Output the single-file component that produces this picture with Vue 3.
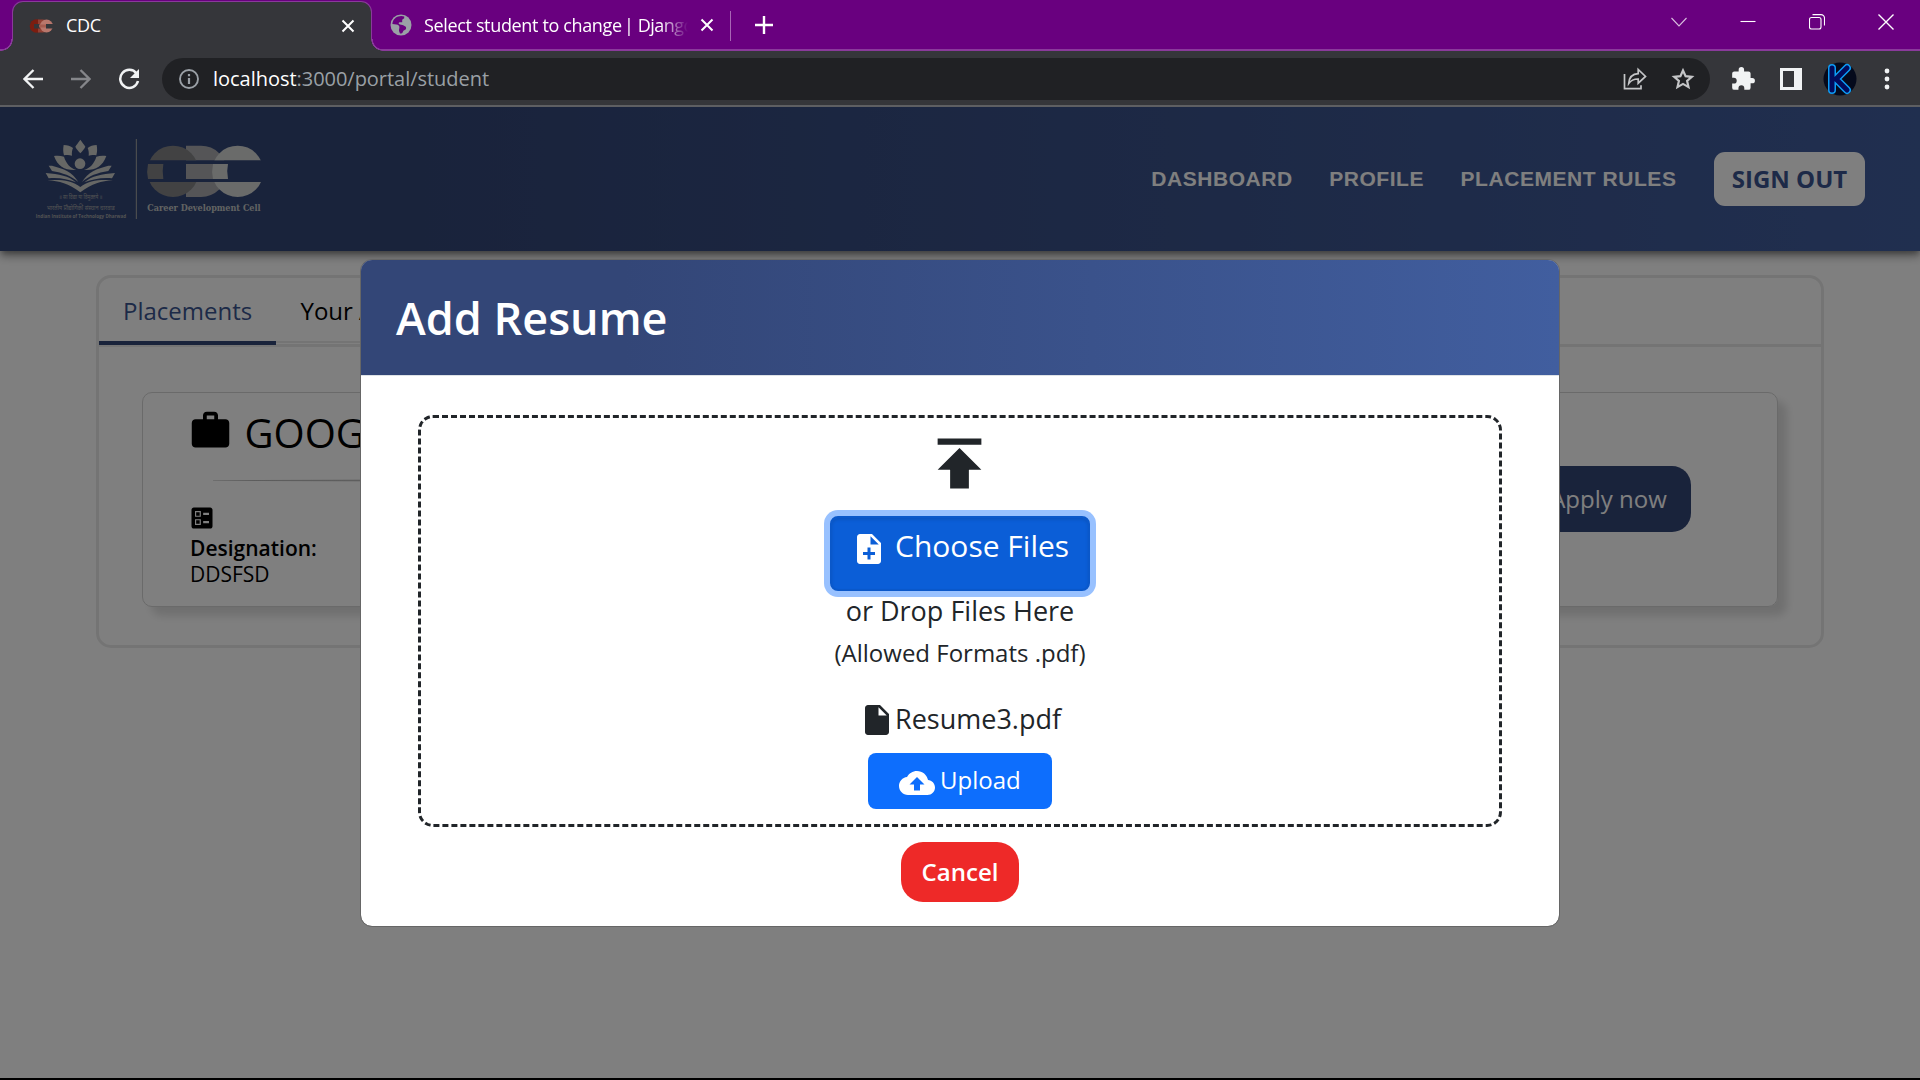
<script setup>
const navLinks = ['DASHBOARD', 'PROFILE', 'PLACEMENT RULES']
</script>

<template>
  <div class="window">
    <div class="tabstrip">
      <div class="tab active">
        <svg class="favicon" width="24" height="16" viewBox="0 0 24 16">
          <circle cx="7.5" cy="8" r="6.8" fill="#7c1d10" />
          <path d="M9 1.5h5a6.5 6.5 0 0 1 0 13H9z" fill="#913f33" />
          <circle cx="17.5" cy="8" r="6.5" fill="#b9776c" />
          <path d="M5 6h6v4.500H5zM17 6h7v4.500h-7z" fill="#35363a" />
          <path d="M10 6.500h7v3h-7z" fill="#a65c50" />
        </svg>
        <span class="tab-title">CDC</span>
        <svg class="tab-close" width="14" height="14" viewBox="0 0 14 14"><path d="M1.500 1.500l11 11M12.500 1.500l-11 11" stroke="#fff" stroke-width="2" /></svg>
      </div>
      <div class="tab second">
        <svg width="22" height="22" viewBox="0 0 22 22">
          <circle cx="11" cy="11" r="10.500" fill="#9aa0a6" />
          <path d="M8 2.500c-3 1-5.500 4-5.600 7.500l4 .5c2 .2 3.200 1.300 3 3l-.4 2.500c-.3 1.500.8 2.200 1 3.600 1.500.1 2.200-.3 2.600-1.100l.8-1.800 2.200-1.200c.7-.6.6-2 .2-2.700l-2.600-1.500c-1-.7-3-.5-4.200-1.300-.7-.6-.2-1.700.5-1.800h2.700V5.800l2-1.600V2.400c-2-.8-4.200-.6-6.200.1z" fill="#69007f" />
        </svg>
        <span class="tab-title fade">Select student to change <span class="tight">| Django</span></span>
        <svg class="tab-close" width="14" height="14" viewBox="0 0 14 14"><path d="M1.500 1.500l11 11M12.500 1.500l-11 11" stroke="#fff" stroke-width="2" /></svg>
      </div>
      <i class="tab-sep"></i>
      <svg class="newtab" width="18" height="18" viewBox="0 0 18 18"><path d="M9 0v18M0 9h18" stroke="#fff" stroke-width="2.400" /></svg>
      <div class="win-controls">
        <svg width="16" height="16" viewBox="0 0 16 16"><path d="M.5 4l7.500 8 7.500-8" stroke="#d9bfdf" /></svg>
        <svg width="16" height="16" viewBox="0 0 16 16"><path d="M.5 7.500h15" /></svg>
        <svg width="16" height="16" viewBox="0 0 16 16"><rect x=".5" y="3.500" width="11.500" height="11.500" rx="2" /><path d="M3.500.6h8.500a3.500 3.500 0 0 1 3.500 3.500V11.500" /></svg>
        <svg width="16" height="16" viewBox="0 0 16 16"><path d="M.5.500l15 15M15.500.500l-15 15" stroke-width="1.400" /></svg>
      </div>
    </div>

    <div class="toolbar">
      <svg class="t-back" width="20" height="20" viewBox="0 0 20 20"><path d="M20 10H2M10.500 1L1.500 10l9 9" fill="none" stroke="#f1f3f4" stroke-width="2.300" /></svg>
      <svg class="t-fwd" width="20" height="20" viewBox="0 0 20 20"><path d="M0 10h18M9.500 1l9 9-9 9" fill="none" stroke="#85868a" stroke-width="2.300" /></svg>
      <svg class="t-reload" width="22" height="22" viewBox="0 0 22 22"><path d="M18.500 5.500A9 9 0 1 0 20 13" fill="none" stroke="#f1f3f4" stroke-width="2.500" /><path d="M21 1v9h-9z" fill="#f1f3f4" /></svg>
      <div class="omnibox">
        <svg width="20" height="20" viewBox="0 0 20 20"><circle cx="10" cy="10" r="9" fill="none" stroke="#9aa0a6" stroke-width="1.900" /><path d="M10 9v6M10 5v2.200" stroke="#9aa0a6" stroke-width="2.200" /></svg>
        <span class="url"><b>localhost</b>:3000/portal/student</span>
        <svg class="share" width="24" height="24" viewBox="0 0 24 24" fill="none" stroke="#c4c5c7" stroke-width="1.700"><path d="M1.500 7v14.700h16.500v-3.500" /><path d="M5.700 16.500c.5-6.500 4-9.700 9.500-9.900V2.500l7.300 6.900-7.300 6.800v-4.200c-4-.1-7 1.100-9.500 4.500z" /></svg>
        <svg class="star" width="24" height="24" viewBox="0 0 24 24"><path d="M12 3.500l2.600 5.700 6.200.6-4.700 4.100 1.400 6.200L12 16.900l-5.500 3.200 1.400-6.200-4.700-4.100 6.200-.6z" fill="none" stroke="#c4c5c7" stroke-width="2.200" /></svg>
      </div>
      <svg class="puzzle" width="26" height="26" viewBox="0 0 24 24" fill="#f1f3f4"><path d="M20.500 11H19V7a2 2 0 0 0-2-2h-4V3.500a2.500 2.500 0 0 0-5 0V5H4a2 2 0 0 0-2 2v3.800h1.500a2.700 2.700 0 0 1 0 5.400H2V20a2 2 0 0 0 2 2h3.800v-1.500a2.700 2.700 0 0 1 5.400 0V22H17a2 2 0 0 0 2-2v-4h1.500a2.500 2.500 0 0 0 0-5z" /></svg>
      <svg class="panel" width="22" height="22" viewBox="0 0 22 22"><path d="M0 0h22v22H0zM3 3v16h11V3z" fill="#f1f3f4" fill-rule="evenodd" /></svg>
      <svg class="avatar" width="34" height="34" viewBox="0 0 34 34">
        <circle cx="17" cy="17" r="16.500" fill="#050a1c" />
        <g fill="none" stroke-linecap="round" stroke-linejoin="round">
          <path d="M9 6v22M24 6L13 17l11 11" stroke="#0d9cf5" stroke-width="8" />
          <path d="M9 6v22M24 6L13 17l11 11" stroke="#020b5c" stroke-width="5" />
        </g>
      </svg>
      <svg class="kebab" width="6" height="22" viewBox="0 0 6 22" fill="#f1f3f4"><circle cx="3" cy="3" r="2.400" /><circle cx="3" cy="11" r="2.400" /><circle cx="3" cy="19" r="2.400" /></svg>
    </div>

    <main class="page">
      <header class="site-header">
        <svg class="logo" width="280" height="144" viewBox="0 0 840 432">
          <g fill="#ccceca" transform="translate(0 9)">
            <path d="M181 89c6 9 12 15 15 21-3 7-9 13-15 20-6-7-12-13-15-20 3-6 9-12 15-21z" />
            <path d="M131 105c11 0 21 3 28 9-3 7-4 15-3 23-9-3-17-2-24-1-3-10-3-20-1-31zM230 105c-11 0-20 3-27 9 3 7 4 15 3 23 8-3 16-2 23-1 3-10 3-20 1-31z" />
            <circle cx="180" cy="161" r="16" />
            <path d="M102 138c10-2 21-1 30 2 6 20 18 34 37 40-34 2-55-10-67-42zM259 138c-10-2-21-1-30 2-6 20-18 34-37 40 34 2 55-10 67-42z" />
            <path d="M86 167l10 0c35 9 62 19 79 49-21-18-47-28-79-33zM275 167l-10 0c-35 9-61 19-79 49 21-18 46-28 79-33z" />
            <path d="M77 189c40 3 70 9 91 28-26-10-52-15-82-12zM285 189c-40 3-70 9-92 28 27-10 53-15 83-12z" />
            <path d="M82 211c38-3 75 0 99 20 24-20 60-23 98-20-36 2-62 9-98 36-36-27-62-34-99-36z" />
          </g>
          <g fill="#a3a5a6" text-anchor="middle">
            <text x="182" y="277" font-size="17" textLength="130" lengthAdjust="spacingAndGlyphs" font-family="Noto Sans, sans-serif">॥ सा विद्या या विमुक्तये ॥</text>
            <text x="182" y="310" font-size="19" textLength="204" lengthAdjust="spacingAndGlyphs" font-family="Noto Sans, sans-serif">भारतीय प्रौद्योगिकी संस्थान धारवाड</text>
            <text x="183" y="333" font-size="15" font-weight="700" textLength="271" lengthAdjust="spacingAndGlyphs" font-family="Open Sans, sans-serif">Indian Institute of Technology Dharwad</text>
          </g>
          <path d="M349 96v240" stroke="#a9a9a4" stroke-width="3" />
          <clipPath id="outer-bands"><path d="M370 110h360v50H370zM370 225h360v50H370z" /></clipPath>
          <g clip-path="url(#outer-bands)">
            <path d="M498 116h45a77 77 0 0 1 0 154h-45z" fill="#aaabaf" />
            <circle cx="459" cy="193" r="77" fill="#848587" />
            <circle cx="653" cy="193" r="77" fill="#d4d7d5" />
          </g>
          <path d="M384 171h46q-4 22 0 45h-46q-5-22 0-45z" fill="#848587" />
          <path d="M498 171h90v45h-90z" fill="#aaabaf" />
          <path d="M579 171h45q-5 22 0 45h-45q-5-22 0-45z" fill="#d4d7d5" />
          <text x="382" y="313" font-size="28" font-weight="700" fill="#c4c6c5" textLength="340" lengthAdjust="spacingAndGlyphs" font-family="DejaVu Serif, serif">Career Development Cell</text>
        </svg>
        <nav class="site-nav">
          <a v-for="link in navLinks" :key="link">{{ link }}</a>
          <button class="signout">SIGN OUT</button>
        </nav>
      </header>

      <section class="panel-box">
        <div class="tabs">
          <span class="ptab selected">Placements</span>
          <span class="ptab">Your Applications</span>
        </div>
        <article class="card">
          <div class="card-info">
            <h2>
              <svg width="45" height="45" viewBox="0 0 24 24"><path d="M20 6h-4V4c0-1.110-.89-2-2-2h-4c-1.110 0-2 .89-2 2v2H4c-1.110 0-1.990.89-1.990 2L2 19c0 1.110.89 2 2 2h16c1.110 0 2-.89 2-2V8c0-1.110-.89-2-2-2zm-6 0h-4V4h4v2z" /></svg>
              <span>GOOGLE</span>
            </h2>
            <div class="rule"></div>
            <svg class="ballot" width="28" height="28" viewBox="0 0 24 24"><path d="M13 9.500h5v-2h-5v2zm0 7h5v-2h-5v2zm6 4.500H5c-1.100 0-2-.9-2-2V5c0-1.100.9-2 2-2h14c1.100 0 2 .9 2 2v14c0 1.100-.9 2-2 2zM6 11h5V6H6v5zm1-4h3v3H7V7zM6 18h5v-5H6v5zm1-4h3v3H7v-3z" /></svg>
            <div class="label">Designation:</div>
            <div class="value">DDSFSD</div>
          </div>
          <button class="apply">Apply now</button>
        </article>
      </section>

      <div class="backdrop">
        <div class="modal">
          <div class="modal-head">Add Resume</div>
          <div class="modal-body">
            <div class="dropzone">
              <svg class="publish" width="75" height="75" viewBox="0 0 24 24" fill="#212529"><path d="M5 4v2h14V4H5zm0 10h4v6h6v-6h4l-7-7-7 7z" /></svg>
              <button class="choose">
                <svg width="36" height="36" viewBox="0 0 24 24" fill="#fff"><path d="M14 2H6c-1.100 0-1.990.9-1.990 2L4 20c0 1.100.89 2 1.990 2H18c1.100 0 2-.9 2-2V8l-6-6zm2 14h-3v3h-2v-3H8v-2h3v-3h2v3h3v2zm-3-7V3.500L18.500 9H13z" /></svg>
                <span>Choose Files</span>
              </button>
              <div class="drop-text">or Drop Files Here</div>
              <div class="formats">(Allowed Formats .pdf)</div>
              <div class="file">
                <svg width="36" height="36" viewBox="0 0 24 24" fill="#212529"><path d="M6 2c-1.100 0-1.990.9-1.990 2L4 20c0 1.100.89 2 1.990 2H18c1.100 0 2-.9 2-2V8l-6-6H6zm7 7V3.500L18.500 9H13z" /></svg>
                <span>Resume3.pdf</span>
              </div>
              <button class="upload">
                <svg width="36" height="36" viewBox="0 0 24 24" fill="#fff"><path d="M19.350 10.040C18.670 6.590 15.640 4 12 4 9.110 4 6.600 5.640 5.350 8.040 2.340 8.360 0 10.910 0 14c0 3.310 2.690 6 6 6h13c2.760 0 5-2.240 5-5 0-2.640-2.050-4.780-4.650-4.960zM14 13v4h-4v-4H7l5-5 5 5h-3z" /></svg>
                <span>Upload</span>
              </button>
            </div>
            <button class="cancel">Cancel</button>
          </div>
        </div>
      </div>
    </main>
    <div class="bottom-edge"></div>
  </div>
</template>

<style>
body { margin: 0; overflow: hidden; }
</style>

<style scoped>
* { box-sizing: border-box; }
button { border: 0; padding: 0; margin: 0; font-family: inherit; white-space: nowrap; }
svg { display: block; flex: none; }
.window { width: 1920px; height: 1080px; overflow: hidden; display: flex; flex-direction: column; font-family: "Open Sans", "Noto Sans", sans-serif; background: #35363a; }

.tabstrip { height: 51px; background: #69007f; display: flex; align-items: flex-start; padding-left: 12px; border-bottom: 2px solid #8a3a9b; color: #fff; font-size: 18px; letter-spacing: -0.35px; position: relative; }
.tab { display: flex; align-items: center; height: 50px; }
.tab.active { position: relative; width: 360px; margin-top: 1px; background: #35363a; border: 1.500px solid #8a3a9b; border-bottom: 0; border-radius: 11px 11px 0 0; padding: 0 16px 2px 16px; }
.tab.active::before, .tab.active::after { content: ""; position: absolute; bottom: 0; width: 12px; height: 12px; }
.tab.active::before { left: -12px; background: radial-gradient(circle at 0 0, #69007f 10px, #8a3a9b 10.500px 11.500px, #35363a 12px); }
.tab.active::after { right: -12px; background: radial-gradient(circle at 100% 0, #69007f 10px, #8a3a9b 10.500px 11.500px, #35363a 12px); }
.favicon { margin-right: 13px; }
.tab-title { line-height: 26px; white-space: nowrap; flex: none; }
.tab.active .tab-title { padding-bottom: 2px; }
.tab.active .tab-close { margin-left: auto; margin-right: 0; }
.second { width: 340px; padding: 0 0 0 18px; }
.second .tab-title { margin-left: 12px; width: 264px; overflow: hidden; }
.tight { margin-left: -2px; letter-spacing: -0.5px; }
.fade { -webkit-mask-image: linear-gradient(to right, #000 236px, transparent 264px); mask-image: linear-gradient(to right, #000 236px, transparent 264px); }
.second .tab-close { margin-left: 12px; }
.tab-sep { width: 1px; height: 30px; margin: 11px 0 0 18px; background: #a866b5; }
.newtab { margin: 16px 0 0 24px; }
.win-controls { margin-left: auto; display: flex; gap: 53px; padding: 14px 26px 0 0; }
.win-controls svg { fill: none; stroke: #fff; stroke-width: 1.100; }

.toolbar { height: 56px; background: #35363a; border-bottom: 2px solid #5e5f62; display: flex; align-items: center; flex: none; padding-top: 1px; }
.t-back { margin-left: 23px; }
.t-fwd { margin-left: 28px; }
.t-reload { margin-left: 27px; }
.omnibox { margin-left: 22px; width: 1548px; height: 42px; border-radius: 21px; background: #202124; display: flex; align-items: center; padding: 0 15px 0 17px; }
.url { margin-left: 14px; font-size: 20px; line-height: 30px; color: #9aa0a6; letter-spacing: -0.03px; }
.url b { font-weight: 400; color: #fff; }
.share { margin-left: auto; }
.star { margin-left: 24px; }
.puzzle { margin-left: 20px; }
.panel { margin-left: 24px; }
.avatar { margin-left: 21px; }
.kebab { margin-left: 27px; }

.page { position: relative; height: 971px; flex: none; background: #fff; overflow: hidden; }
.site-header { position: relative; height: 144px; display: flex; background: linear-gradient(90deg, #334677 0%, #334677 22%, #415e9f 100%); box-shadow: 0 3px 6px -1.500px rgba(0,0,0,.35), 0 6px 8px rgba(0,0,0,.2), 0 2px 15px rgba(0,0,0,.16); padding-left: 20px; }
.site-nav { margin-left: auto; padding-right: 55px; height: 144px; display: flex; align-items: center; gap: 36.500px; font: 700 21px/30px "Liberation Sans", Arial, sans-serif; letter-spacing: .55px; color: #fff; }
.site-nav a { padding-bottom: 1px; }
.signout { width: 151px; height: 54px; margin-left: 1px; border-radius: 11px; background: #fff; color: #3b5590; font: 700 24px/54px "Open Sans", sans-serif; }

.panel-box { width: 1728px; height: 373px; margin: 24px 0 0 96px; border: 3px solid #e9e9e9; border-radius: 15px; }
.tabs { height: 66px; display: flex; border-bottom: 3px solid #e9e9e9; box-sizing: content-box; }
.ptab { height: 65px; font-size: 24px; line-height: 66px; padding: 0 24.500px; border-bottom: 2px solid #e9e9e9; color: #000; }
.selected { width: 177px; height: 67px; padding: 0 24px; color: #3b5590; border-bottom: 4px solid #334677; }
.card { width: 1636px; height: 215px; margin: 45px 0 0 43px; border: 1.500px solid #d4d4d4; border-radius: 10px; box-shadow: 9px 9px 8px rgba(0,0,0,.13); display: flex; padding-left: 47px; }
.card-info { width: 900px; color: #000; }
h2 { margin: 15px 0 0 -2px; display: flex; font-weight: 400; font-size: 40px; line-height: 50px; }
h2 span { margin-left: 11.500px; }
.rule { width: 820px; height: 3px; margin: 21px 0 0 23px; background: linear-gradient(to right, #b8b8b8, #d0d0d0); clip-path: polygon(0 40%, 50% 0, 100% 0, 100% 100%, 50% 100%, 0 60%); }
.ballot { margin: 22px 0 0 -2px; }
.label { margin-top: 3px; font-size: 21px; font-weight: 600; line-height: 26px; }
.value { font-size: 21px; line-height: 26px; }
.apply { margin: 73px 86px 0 auto; width: 165px; height: 66px; border-radius: 19px; background: #334677; color: #fff; font-size: 24px; line-height: 64px; }

.backdrop { position: absolute; inset: 0; background: rgba(0,0,0,.5); padding: 152px 0 0 360px; }
.modal { width: 1200px; height: 668px; border: 1px solid #666; border-radius: 12px; background: #fff; background-clip: padding-box; overflow: hidden; color: #212529; }
.modal-head { height: 116px; border-bottom: 1px solid #dee2e6; background: linear-gradient(90deg, #334677 0%, #334677 22%, #415e9f 100%); color: #fff; font-size: 45px; font-weight: 600; line-height: 116px; padding-left: 35px; }
.modal-body { display: flex; flex-direction: column; align-items: center; padding-top: 39px; }
.dropzone { width: 1084px; height: 412px; border: 3px dashed #212529; border-radius: 15px; display: flex; flex-direction: column; align-items: center; }
.publish { margin: 8px 1px 0 0; }
.choose { width: 260px; height: 75px; margin-top: 15px; border-radius: 8px; background: #0b5ed7; border: 2px solid #0a58ca; box-shadow: 0 0 0 6px #98c1ff, inset 0 2px 3px rgba(0,0,0,.1); color: #fff; display: flex; align-items: flex-start; padding: 13px 0 0 19px; font-size: 30px; }
.choose span { margin-left: 8px; line-height: 30px; }
.drop-text { font-size: 27px; line-height: 40px; }
.formats { font-size: 24px; line-height: 36px; margin-top: 4px; }
.file { display: flex; height: 40px; margin: 27px 0 0; padding-left: 5px; font-size: 27px; }
.file svg { margin-left: -5px; margin-top: 4px; }
.file span { margin-left: 0; line-height: 41px; }
.upload { width: 184px; height: 56px; margin-top: 15px; border-radius: 8px; background: #0d6efd; color: #fff; display: flex; align-items: flex-start; padding: 12px 0 0 31px; font-size: 24px; font-weight: 500; }
.upload span { margin-left: 5px; line-height: 29px; }
.cancel { width: 118px; height: 60px; margin-top: 15px; border-radius: 22px; background: #ee2928; color: #fff; font-size: 24px; font-weight: 600; line-height: 60px; }
.bottom-edge { height: 2px; background: #000; flex: none; }
</style>
